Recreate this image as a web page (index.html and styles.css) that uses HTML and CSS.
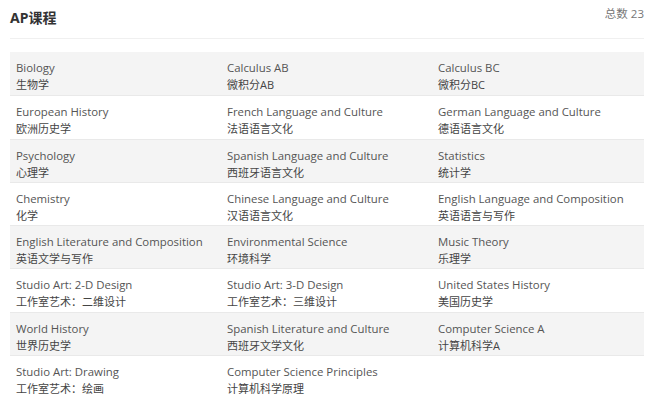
FILE: index.html
```html
<!DOCTYPE html>
<html lang="zh">
<head>
<meta charset="utf-8">
<link rel="stylesheet" href="styles.css">
</head>
<body>
<div class="page">
  <div class="header">
    <h2 class="title">AP课程</h2>
    <span class="count">总数 23</span>
  </div>
  <div class="grid">
    <div class="row">
      <div class="cell"><div class="en">Biology</div><div class="zh">生物学</div></div>
      <div class="cell"><div class="en">Calculus AB</div><div class="zh">微积分AB</div></div>
      <div class="cell"><div class="en">Calculus BC</div><div class="zh">微积分BC</div></div>
    </div>
    <div class="row">
      <div class="cell"><div class="en">European History</div><div class="zh">欧洲历史学</div></div>
      <div class="cell"><div class="en">French Language and Culture</div><div class="zh">法语语言文化</div></div>
      <div class="cell"><div class="en">German Language and Culture</div><div class="zh">德语语言文化</div></div>
    </div>
    <div class="row">
      <div class="cell"><div class="en">Psychology</div><div class="zh">心理学</div></div>
      <div class="cell"><div class="en">Spanish Language and Culture</div><div class="zh">西班牙语言文化</div></div>
      <div class="cell"><div class="en">Statistics</div><div class="zh">统计学</div></div>
    </div>
    <div class="row">
      <div class="cell"><div class="en">Chemistry</div><div class="zh">化学</div></div>
      <div class="cell"><div class="en">Chinese Language and Culture</div><div class="zh">汉语语言文化</div></div>
      <div class="cell"><div class="en">English Language and Composition</div><div class="zh">英语语言与写作</div></div>
    </div>
    <div class="row">
      <div class="cell"><div class="en">English Literature and Composition</div><div class="zh">英语文学与写作</div></div>
      <div class="cell"><div class="en">Environmental Science</div><div class="zh">环境科学</div></div>
      <div class="cell"><div class="en">Music Theory</div><div class="zh">乐理学</div></div>
    </div>
    <div class="row">
      <div class="cell"><div class="en">Studio Art: 2-D Design</div><div class="zh">工作室艺术：二维设计</div></div>
      <div class="cell"><div class="en">Studio Art: 3-D Design</div><div class="zh">工作室艺术：三维设计</div></div>
      <div class="cell"><div class="en">United States History</div><div class="zh">美国历史学</div></div>
    </div>
    <div class="row">
      <div class="cell"><div class="en">World History</div><div class="zh">世界历史学</div></div>
      <div class="cell"><div class="en">Spanish Literature and Culture</div><div class="zh">西班牙文学文化</div></div>
      <div class="cell"><div class="en">Computer Science A</div><div class="zh">计算机科学A</div></div>
    </div>
    <div class="row">
      <div class="cell"><div class="en">Studio Art: Drawing</div><div class="zh">工作室艺术：绘画</div></div>
      <div class="cell"><div class="en">Computer Science Principles</div><div class="zh">计算机科学原理</div></div>
      <div class="cell"></div>
    </div>
  </div>
</div>
</body>
</html>
```
FILE: styles.css
```css
html, body {
  margin: 0;
  padding: 0;
  background: #fff;
}
body {
  font-family: "Open Sans", "Noto Sans CJK SC", sans-serif;
  color: #555;
}
.page {
  width: 634px;
  padding: 0 12px 0 10px;
}
.header {
  display: flex;
  justify-content: space-between;
  align-items: flex-start;
  height: 38px;
  border-bottom: 1px solid #f0f0f0;
  margin-bottom: 13px;
}
.title {
  margin: 8px 0 0 0;
  font-size: 14px;
  font-weight: bold;
  color: #333;
  line-height: 20px;
  font-family: "Noto Sans", "Noto Sans CJK SC", sans-serif;
}
.count {
  margin-top: 5px;
  font-size: 11.5px;
  color: #777;
  line-height: 18px;
}
.grid {
  display: flex;
  flex-direction: column;
}
.row {
  display: grid;
  grid-template-columns: 211px 211px 212px;
  height: 43.3px;
  box-sizing: border-box;
  border-top: 1px solid #e9e9e9;
}
.row:first-child {
  border-top: none;
}
.row:nth-child(odd) {
  background: #f4f4f4;
}
.cell {
  padding: 7px 0 0 6px;
}
.en {
  font-size: 11.4px;
  line-height: 17px;
  color: #555;
}
.zh {
  font-size: 11px;
  line-height: 17px;
  color: #444;
}
```
